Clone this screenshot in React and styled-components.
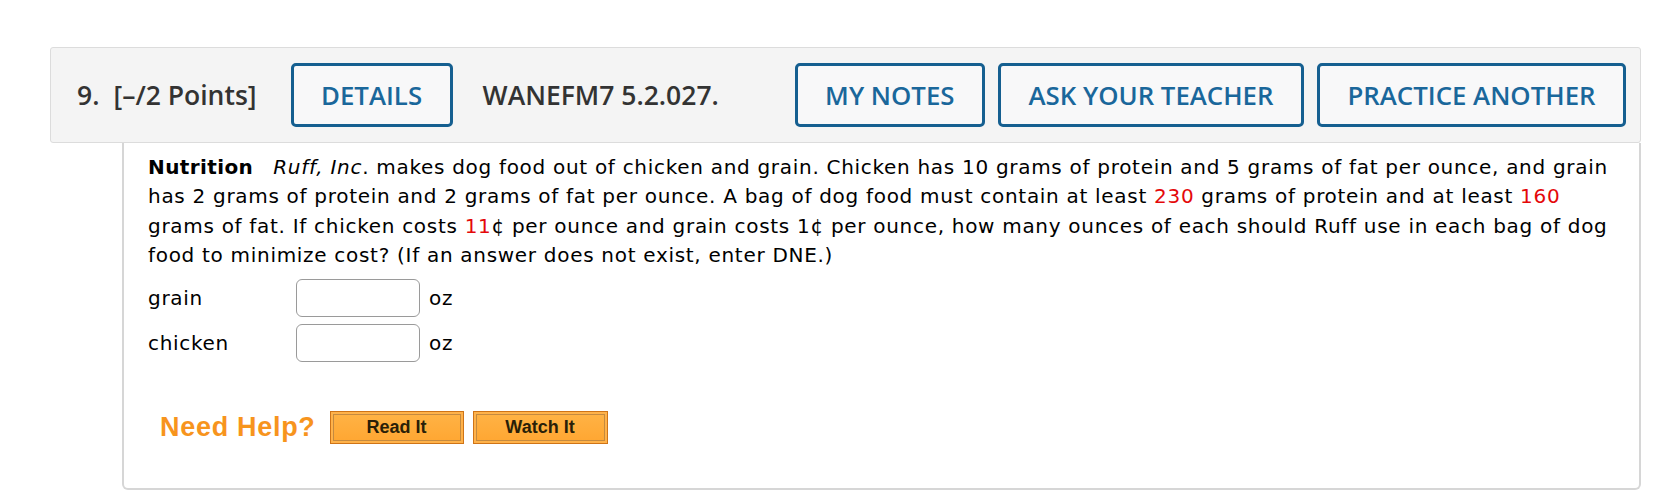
import React from "react";
import styled, { createGlobalStyle } from "styled-components";

const Global = createGlobalStyle`
  html, body { margin: 0; padding: 0; background: #ffffff; }
  body { width: 1668px; height: 495px; overflow: hidden; }
`;

const Page = styled.div`
  padding: 47px 0 0 50px;
  width: 1591px;
`;

const Header = styled.div`
  height: 94px;
  box-sizing: content-box;
  border: 1px solid #dcdcdc;
  border-radius: 3px;
  background: #f4f4f4;
  display: flex;
  align-items: center;
  padding: 0 14px 0 26px;
  font-family: "Open Sans", "Liberation Sans", sans-serif;
  font-weight: 600;
  font-size: 26.5px;
  color: #333333;
`;

const Num = styled.span`
  margin-right: 14px;
`;

const Points = styled.span`
  margin-right: 34px;
`;

const Code = styled.span`
  margin: 0 33px 0 30px;
`;

const RightGroup = styled.div`
  margin-left: auto;
  display: flex;
  gap: 13px;
`;

const OutlineButton = styled.button`
  height: 64px;
  box-sizing: border-box;
  border: 3px solid #155f90;
  border-radius: 5px;
  background: #f8f8f9;
  color: #1a679b;
  font-family: "Open Sans", "Liberation Sans", sans-serif;
  font-weight: 600;
  font-size: 25.8px;
  padding: 0 27.5px;
  cursor: pointer;
`;

const Body = styled.div`
  margin-left: 72px;
  border: 2px solid #d6d6d6;
  border-top: none;
  border-radius: 0 0 6px 6px;
  padding: 10px 24px 44px 24px;
  font-family: "DejaVu Sans", Verdana, sans-serif;
  font-size: 20px;
  letter-spacing: 0.7px;
  line-height: 29.3px;
  color: #000000;
`;

const Question = styled.p`
  margin: 0;
`;

const Title = styled.b`
  letter-spacing: 0.4px;
  margin-right: 20px;
`;

const Red = styled.span`
  color: #e4080a;
`;

const Answers = styled.div`
  margin-top: 9px;
  display: grid;
  grid-template-columns: 148px auto;
  row-gap: 7px;
  align-items: center;
  justify-content: start;
`;

const Field = styled.div`
  display: flex;
  align-items: center;
  gap: 9px;
`;

const Input = styled.input`
  width: 124px;
  height: 38px;
  box-sizing: border-box;
  border: 1px solid #9a9a9a;
  border-radius: 6px;
  background: #ffffff;
`;

const Help = styled.div`
  margin: 49px 0 0 12px;
  display: flex;
  align-items: center;
  gap: 9px;
`;

const HelpLabel = styled.span`
  font-family: "Liberation Sans", Arial, sans-serif;
  font-weight: 700;
  font-size: 27px;
  color: #f7941d;
  margin-right: 5px;
`;

const OrangeButton = styled.button`
  width: ${(p) => p.$w}px;
  height: 33px;
  box-sizing: border-box;
  border: 1px solid #cf7417;
  background: linear-gradient(#ffb346, #ffa631);
  box-shadow: inset 0 0 0 2px #ffb24a, inset 0 0 0 3px #c48a40;
  font-family: "Liberation Sans", Arial, sans-serif;
  font-weight: 700;
  font-size: 18px;
  color: #2a1f08;
  padding: 0;
  cursor: pointer;
`;

export default function App() {
  return (
    <>
      <Global />
      <Page>
        <Header>
          <Num>9.</Num>
          <Points>[–/2 Points]</Points>
          <OutlineButton>DETAILS</OutlineButton>
          <Code>WANEFM7 5.2.027.</Code>
          <RightGroup>
            <OutlineButton>MY NOTES</OutlineButton>
            <OutlineButton>ASK YOUR TEACHER</OutlineButton>
            <OutlineButton>PRACTICE ANOTHER</OutlineButton>
          </RightGroup>
        </Header>
        <Body>
          <Question>
            <Title>Nutrition</Title>
            <i>Ruff, Inc</i>. makes dog food out of chicken and grain. Chicken has 10 grams of protein and 5 grams of fat per ounce, and grain has 2 grams of protein and 2 grams of fat per ounce. A bag of dog food must contain at least <Red>230</Red> grams of protein and at least <Red>160</Red> grams of fat. If chicken costs <Red>11</Red>¢ per ounce and grain costs 1¢ per ounce, how many ounces of each should Ruff use in each bag of dog food to minimize cost? (If an answer does not exist, enter DNE.)
          </Question>
          <Answers>
            <span>grain</span>
            <Field>
              <Input type="text" aria-label="grain" />
              <span>oz</span>
            </Field>
            <span>chicken</span>
            <Field>
              <Input type="text" aria-label="chicken" />
              <span>oz</span>
            </Field>
          </Answers>
          <Help>
            <HelpLabel>Need Help?</HelpLabel>
            <OrangeButton $w={134}>Read It</OrangeButton>
            <OrangeButton $w={135}>Watch It</OrangeButton>
          </Help>
        </Body>
      </Page>
    </>
  );
}
